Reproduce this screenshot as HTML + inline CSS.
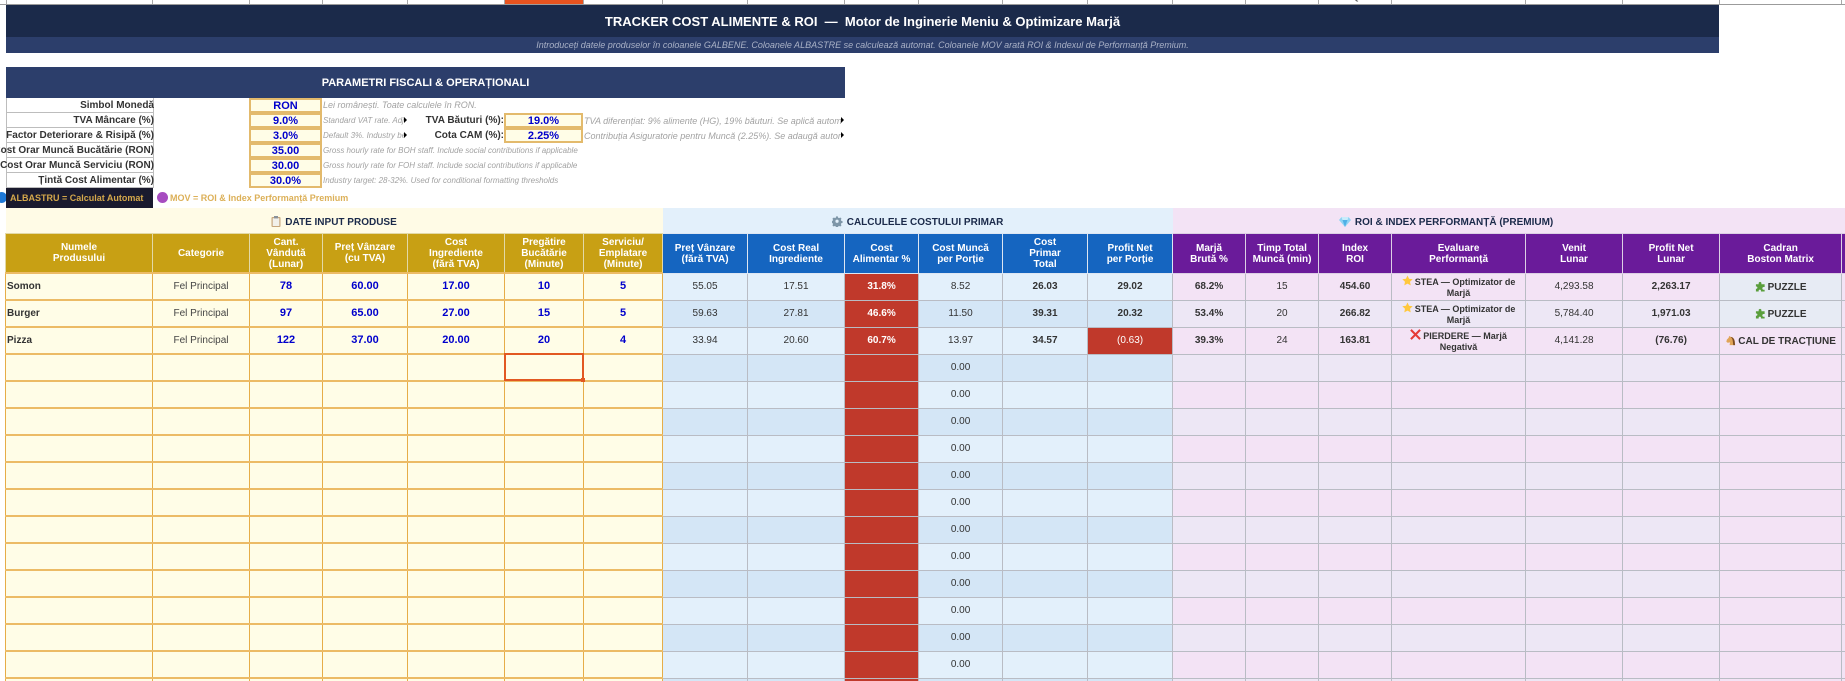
<!DOCTYPE html>
<html lang="ro">
<head>
<meta charset="utf-8">
<title>Tracker Cost Alimente &amp; ROI</title>
<style>
html,body{margin:0;padding:0;background:#fff;width:1845px;height:681px;overflow:hidden}
body{font-family:"Liberation Sans",sans-serif}
#w{position:absolute;left:0;top:0;width:1845px;height:681px;overflow:hidden;background:#fff}
.a{position:absolute;white-space:pre;overflow:hidden}
.top{left:0;top:0;width:1845px;height:4px;border-bottom:1px solid #9b9b9b;background:#fff}
.tl{position:absolute;top:0;width:1px;height:4px;background:#a8a8a8}
.title{left:6px;top:5px;width:1713px;height:32px;background:#1b2a4a;color:#fff;font:bold 13px/34px "Liberation Sans",sans-serif;text-align:center}
.sub{left:6px;top:37px;width:1713px;height:16px;background:#2c3e6b;color:#a9b1c6;font:italic 9px/16px "Liberation Sans",sans-serif;text-align:center}
.phead{left:6px;top:67px;width:839px;height:31px;background:#2c3e6b;color:#fff;font:bold 11px/33px "Liberation Sans",sans-serif;text-align:center}
.lab{left:6px;width:146px;height:14px;border:1px solid #bdbdbd;border-top:0;overflow:visible;background:#fff}
.lab span{position:absolute;right:-1px;top:1px;white-space:pre;font:bold 10px/14px "Liberation Sans",sans-serif;color:#333}
.val{width:69px;height:11px;border:2px solid #e3ba6c;background:#fffde7;color:#0000cc;font:bold 11px/13px "Liberation Sans",sans-serif;text-align:center}
.lab2{width:130px;text-align:right;font:bold 10px/15px "Liberation Sans",sans-serif;color:#333;height:16px}
.note{color:#a2a2a2;font:italic 8px/15px "Liberation Sans",sans-serif;height:15px}
.note2{color:#a2a2a2;font:italic 9px/15px "Liberation Sans",sans-serif;height:15px}
.tri{position:absolute;width:0;height:0;border-left:3px solid #000;border-top:3px solid transparent;border-bottom:3px solid transparent}
.leg{left:6px;top:188px;width:147px;height:20px;background:#1a1a2e;color:#d4a84b;font:bold 9px/20px "Liberation Sans",sans-serif;text-indent:4px}
.leg2{left:170px;top:188px;height:20px;color:#dcb058;font:bold 9px/20px "Liberation Sans",sans-serif}
.dot{position:absolute;border-radius:50%}
table{position:absolute;left:5px;top:208px;border-collapse:collapse;table-layout:fixed;width:1856px}
td{padding:0;overflow:hidden;text-align:center;vertical-align:middle;font:10px/11px "Liberation Sans",sans-serif;color:#333;white-space:nowrap}
tr.s{height:25px}
tr.h{height:40px}
tr.r{height:27px}
tr.s td{padding-top:3px}
tr.h td{padding-top:1px}
.sec{font-weight:bold;color:#1b2a4a;border:0}
.sy{background:#fffbe6}.sb{background:#e3f0fb}.sp{background:#f3e3f5}
.sec svg{vertical-align:-2px;margin-right:4px}
.hy,.hb,.hp{color:#fff;font-weight:bold;border:1px solid #e6e3dc;white-space:normal}
.hy{background:#c8a014;border-color:#e3d9a6}
.hb{background:#1565c0;border-color:#dde6f2}
.hp{background:#6a1b9a;border-color:#dccfe4}
.y{background:#fffde7;border-style:solid;border-width:2px 1px;border-color:#ecbb66 #e6ad48}
.b,.p,.q,.red,.c{border:1px solid #b9bcc4}
.b{background:#e3f0fb}
tr.alt .b{background:#d4e6f6}
.p{background:#f3e3f5}
tr.alt .p{background:#ede7f5}
.q{background:#f3e3f5}
.c{background:#e7ebf4}
.red{background:#c0392b;color:#fff}
.n{color:#0000cc;font-weight:bold;font-size:11px}
.l{text-align:left;font-weight:bold;padding-left:1px}
.g{color:#444}
.v{font-weight:bold}
.e{font-weight:bold;font-size:9px;white-space:normal}
.e svg{vertical-align:-1px;margin-right:2px}
.cd{font-weight:bold}
.cd svg{vertical-align:-2px;margin-right:2px}
.sel{left:504px;top:353px;width:76px;height:24px;border:2px solid #e25822;overflow:visible}
.sel i{position:absolute;right:-3px;bottom:-3px;width:4px;height:4px;background:#e25822}
</style>
</head>
<body>
<div id="w">

<div class="a top">
<div class="tl" style="left:6px"></div><div class="tl" style="left:152px"></div><div class="tl" style="left:249px"></div><div class="tl" style="left:322px"></div><div class="tl" style="left:407px"></div><div class="tl" style="left:504px"></div><div class="tl" style="left:583px"></div><div class="tl" style="left:662px"></div><div class="tl" style="left:747px"></div><div class="tl" style="left:844px"></div><div class="tl" style="left:918px"></div><div class="tl" style="left:1002px"></div><div class="tl" style="left:1087px"></div><div class="tl" style="left:1172px"></div><div class="tl" style="left:1245px"></div><div class="tl" style="left:1318px"></div><div class="tl" style="left:1391px"></div><div class="tl" style="left:1525px"></div><div class="tl" style="left:1622px"></div><div class="tl" style="left:1719px"></div><div class="tl" style="left:1841px"></div>
<div style="position:absolute;left:505px;top:0;width:78px;height:4px;background:#e8531f"></div>
<div style="position:absolute;left:1351px;top:-9px;font:11px/11px 'Liberation Sans',sans-serif;color:#444">Q</div>
</div>

<div class="a title">TRACKER COST ALIMENTE &amp; ROI  —  Motor de Inginerie Meniu &amp; Optimizare Marjă</div>
<div class="a sub">Introduceți datele produselor în coloanele GALBENE. Coloanele ALBASTRE se calculează automat. Coloanele MOV arată ROI &amp; Indexul de Performanță Premium.</div>
<div class="a phead">PARAMETRI FISCALI &amp; OPERAȚIONALI</div>

<div class="a lab" style="top:98px"><span>Simbol Monedă</span></div>
<div class="a lab" style="top:113px"><span>TVA Mâncare (%)</span></div>
<div class="a lab" style="top:128px"><span>Factor Deteriorare &amp; Risipă (%)</span></div>
<div class="a lab" style="top:143px"><span>Cost Orar Muncă Bucătărie (RON)</span></div>
<div class="a lab" style="top:158px"><span>Cost Orar Muncă Serviciu (RON)</span></div>
<div class="a lab" style="top:173px"><span>Țintă Cost Alimentar (%)</span></div>

<div class="a val" style="left:249px;top:98px">RON</div>
<div class="a val" style="left:249px;top:113px">9.0%</div>
<div class="a val" style="left:249px;top:128px">3.0%</div>
<div class="a val" style="left:249px;top:143px">35.00</div>
<div class="a val" style="left:249px;top:158px">30.00</div>
<div class="a val" style="left:249px;top:173px">30.0%</div>

<div class="a note2" style="left:323px;top:98px;width:180px">Lei românești. Toate calculele în RON.</div>
<div class="a note" style="left:323px;top:113px;width:81px">Standard VAT rate. Adjust if applicable</div>
<div class="a note" style="left:323px;top:128px;width:81px">Default 3%. Industry benchmark</div>
<div class="a note" style="left:323px;top:143px;width:262px">Gross hourly rate for BOH staff. Include social contributions if applicable</div>
<div class="a note" style="left:323px;top:158px;width:262px">Gross hourly rate for FOH staff. Include social contributions if applicable</div>
<div class="a note" style="left:323px;top:173px;width:262px">Industry target: 28-32%. Used for conditional formatting thresholds</div>
<div class="tri" style="left:404px;top:117px"></div>
<div class="tri" style="left:404px;top:132px"></div>

<div class="a lab2" style="left:374px;top:113px">TVA Băuturi (%):</div>
<div class="a lab2" style="left:374px;top:128px">Cota CAM (%):</div>
<div class="a val" style="left:504px;top:113px;width:75px">19.0%</div>
<div class="a val" style="left:504px;top:128px;width:75px">2.25%</div>
<div class="a note2" style="left:584px;top:114px;width:257px">TVA diferențiat: 9% alimente (HG), 19% băuturi. Se aplică automat la calcule</div>
<div class="a note2" style="left:584px;top:129px;width:257px">Contribuția Asiguratorie pentru Muncă (2.25%). Se adaugă automat la calcule</div>
<div class="tri" style="left:841px;top:117px"></div>
<div class="tri" style="left:841px;top:132px"></div>

<div class="dot" style="left:-4px;top:192px;width:11px;height:11px;background:#1e78d6"></div>
<div class="a leg">ALBASTRU = Calculat Automat</div>
<div class="dot" style="left:157px;top:192px;width:11px;height:11px;background:#a64cc0"></div>
<div class="a leg2">MOV = ROI &amp; Index Performanță Premium</div>

<table>
<colgroup>
<col style="width:147px"><col style="width:97px"><col style="width:73px"><col style="width:85px"><col style="width:97px"><col style="width:79px"><col style="width:79px">
<col style="width:85px"><col style="width:97px"><col style="width:74px"><col style="width:84px"><col style="width:85px"><col style="width:85px">
<col style="width:73px"><col style="width:73px"><col style="width:73px"><col style="width:134px"><col style="width:97px"><col style="width:97px"><col style="width:122px"><col style="width:20px">
</colgroup>
<tr class="s">
<td class="sec sy" colspan="7"><svg width="10" height="11" viewBox="0 0 10 11"><rect x="0.5" y="1" width="9" height="10" rx="1" fill="#c7a67c"/><rect x="1.7" y="2.2" width="6.6" height="7.8" fill="#f2f0ea"/><rect x="3" y="0" width="4" height="2.4" fill="#8a9199"/></svg>DATE INPUT PRODUSE</td>
<td class="sec sb" colspan="6"><svg width="11" height="11" viewBox="0 0 24 24"><path fill="#7e96a8" d="M10 1h4l1 3.200 2.200.9 3-1.500 2.800 2.800-1.500 3 .9 2.200 3.200 1v4l-3.200 1-.9 2.200 1.500 3-2.800 2.800-3-1.500-2.200.9-1 3.200h-4l-1-3.200-2.200-.9-3 1.500-2.800-2.800 1.500-3-.9-2.200-3.200-1v-4l3.200-1 .9-2.200-1.500-3L4.600 3.600l3 1.500 1.400-.9z" transform="scale(.9)"/><circle cx="11" cy="11.500" r="3.500" fill="#e3f0fb"/></svg>CALCULELE COSTULUI PRIMAR</td>
<td class="sec sp" colspan="6"><svg width="12" height="11" viewBox="0 0 12 11"><path d="M2.500 1h7L12 4l-6 7-6-7z" fill="#8fd3f4"/><path d="M3.500 4h5L6 11z" fill="#4fb0e6"/><path d="M2.500 1h7L8.500 4h-5z" fill="#c9ecfb"/></svg>ROI &amp; INDEX PERFORMANȚĂ (PREMIUM)</td>
<td class="sp" style="border:0"></td><td class="sp" style="border:0"></td>
</tr>
<tr class="h">
<td class="hy">Numele<br>Produsului</td><td class="hy">Categorie</td><td class="hy">Cant.<br>Vândută<br>(Lunar)</td><td class="hy">Preț Vânzare<br>(cu TVA)</td><td class="hy">Cost<br>Ingrediente<br>(fără TVA)</td><td class="hy">Pregătire<br>Bucătărie<br>(Minute)</td><td class="hy">Serviciu/<br>Emplatare<br>(Minute)</td>
<td class="hb">Preț Vânzare<br>(fără TVA)</td><td class="hb">Cost Real<br>Ingrediente</td><td class="hb">Cost<br>Alimentar %</td><td class="hb">Cost Muncă<br>per Porție</td><td class="hb">Cost<br>Primar<br>Total</td><td class="hb">Profit Net<br>per Porție</td>
<td class="hp">Marjă<br>Brută %</td><td class="hp">Timp Total<br>Muncă (min)</td><td class="hp">Index<br>ROI</td><td class="hp">Evaluare<br>Performanță</td><td class="hp">Venit<br>Lunar</td><td class="hp">Profit Net<br>Lunar</td><td class="hp">Cadran<br>Boston Matrix</td><td class="hp"></td>
</tr>
<tr class="r">
<td class="y l">Somon</td><td class="y g">Fel Principal</td><td class="y n">78</td><td class="y n">60.00</td><td class="y n">17.00</td><td class="y n">10</td><td class="y n">5</td>
<td class="b">55.05</td><td class="b">17.51</td><td class="red v">31.8%</td><td class="b">8.52</td><td class="b v">26.03</td><td class="b v">29.02</td>
<td class="p v">68.2%</td><td class="p">15</td><td class="p v">454.60</td><td class="p e"><svg width="11" height="11" viewBox="0 0 24 24"><path fill="#ffc83d" d="M12 1l3.400 7.300 7.900 1-5.800 5.400 1.500 7.900L12 18.700l-7 3.900 1.500-7.900L.7 9.300l7.900-1z"/></svg>STEA — Optimizator de Marjă</td><td class="p">4,293.58</td><td class="p v">2,263.17</td><td class="c cd"><svg width="11" height="11" viewBox="0 0 24 24"><path fill="#5a9e3c" d="M2 7h6V5c0-4 6-4 6 0v2h7v6h-2c-4 0-4 6 0 6h2v4h-8v-2c0-3-5-3-5 0v2H2v-6h1c3 0 3-5 0-5H2z"/></svg>PUZZLE</td><td class="q"></td>
</tr>
<tr class="r alt">
<td class="y l">Burger</td><td class="y g">Fel Principal</td><td class="y n">97</td><td class="y n">65.00</td><td class="y n">27.00</td><td class="y n">15</td><td class="y n">5</td>
<td class="b">59.63</td><td class="b">27.81</td><td class="red v">46.6%</td><td class="b">11.50</td><td class="b v">39.31</td><td class="b v">20.32</td>
<td class="p v">53.4%</td><td class="p">20</td><td class="p v">266.82</td><td class="p e"><svg width="11" height="11" viewBox="0 0 24 24"><path fill="#ffc83d" d="M12 1l3.400 7.300 7.900 1-5.800 5.400 1.500 7.900L12 18.700l-7 3.900 1.500-7.900L.7 9.300l7.900-1z"/></svg>STEA — Optimizator de Marjă</td><td class="p">5,784.40</td><td class="p v">1,971.03</td><td class="c cd"><svg width="11" height="11" viewBox="0 0 24 24"><path fill="#5a9e3c" d="M2 7h6V5c0-4 6-4 6 0v2h7v6h-2c-4 0-4 6 0 6h2v4h-8v-2c0-3-5-3-5 0v2H2v-6h1c3 0 3-5 0-5H2z"/></svg>PUZZLE</td><td class="q"></td>
</tr>
<tr class="r">
<td class="y l">Pizza</td><td class="y g">Fel Principal</td><td class="y n">122</td><td class="y n">37.00</td><td class="y n">20.00</td><td class="y n">20</td><td class="y n">4</td>
<td class="b">33.94</td><td class="b">20.60</td><td class="red v">60.7%</td><td class="b">13.97</td><td class="b v">34.57</td><td class="red">(0.63)</td>
<td class="p v">39.3%</td><td class="p">24</td><td class="p v">163.81</td><td class="p e"><svg width="11" height="11" viewBox="0 0 24 24"><path fill="none" stroke="#e53935" stroke-width="4.500" d="M2 2l20 20M22 2L2 22"/></svg>PIERDERE — Marjă Negativă</td><td class="p">4,141.28</td><td class="p v">(76.76)</td><td class="q cd"><svg width="11" height="11" viewBox="0 0 24 24"><path fill="#e0a458" d="M9 2l3 2c5 0 8 4 9 9l1 9H10l1-6-5 1-3-2 1-5 4-4z"/><path fill="#7c4a21" d="M12 4c5 0 8 4 9 9l1 9h-4l-1-9c-.5-4-2-7-5-9z"/></svg>CAL DE TRACȚIUNE</td><td class="q"></td>
</tr>
<tr class="r alt"><td class="y"></td><td class="y"></td><td class="y"></td><td class="y"></td><td class="y"></td><td class="y"></td><td class="y"></td><td class="b"></td><td class="b"></td><td class="red"></td><td class="b">0.00</td><td class="b"></td><td class="b"></td><td class="p"></td><td class="p"></td><td class="p"></td><td class="p"></td><td class="p"></td><td class="p"></td><td class="q"></td><td class="q"></td></tr>
<tr class="r"><td class="y"></td><td class="y"></td><td class="y"></td><td class="y"></td><td class="y"></td><td class="y"></td><td class="y"></td><td class="b"></td><td class="b"></td><td class="red"></td><td class="b">0.00</td><td class="b"></td><td class="b"></td><td class="p"></td><td class="p"></td><td class="p"></td><td class="p"></td><td class="p"></td><td class="p"></td><td class="q"></td><td class="q"></td></tr>
<tr class="r alt"><td class="y"></td><td class="y"></td><td class="y"></td><td class="y"></td><td class="y"></td><td class="y"></td><td class="y"></td><td class="b"></td><td class="b"></td><td class="red"></td><td class="b">0.00</td><td class="b"></td><td class="b"></td><td class="p"></td><td class="p"></td><td class="p"></td><td class="p"></td><td class="p"></td><td class="p"></td><td class="q"></td><td class="q"></td></tr>
<tr class="r"><td class="y"></td><td class="y"></td><td class="y"></td><td class="y"></td><td class="y"></td><td class="y"></td><td class="y"></td><td class="b"></td><td class="b"></td><td class="red"></td><td class="b">0.00</td><td class="b"></td><td class="b"></td><td class="p"></td><td class="p"></td><td class="p"></td><td class="p"></td><td class="p"></td><td class="p"></td><td class="q"></td><td class="q"></td></tr>
<tr class="r alt"><td class="y"></td><td class="y"></td><td class="y"></td><td class="y"></td><td class="y"></td><td class="y"></td><td class="y"></td><td class="b"></td><td class="b"></td><td class="red"></td><td class="b">0.00</td><td class="b"></td><td class="b"></td><td class="p"></td><td class="p"></td><td class="p"></td><td class="p"></td><td class="p"></td><td class="p"></td><td class="q"></td><td class="q"></td></tr>
<tr class="r"><td class="y"></td><td class="y"></td><td class="y"></td><td class="y"></td><td class="y"></td><td class="y"></td><td class="y"></td><td class="b"></td><td class="b"></td><td class="red"></td><td class="b">0.00</td><td class="b"></td><td class="b"></td><td class="p"></td><td class="p"></td><td class="p"></td><td class="p"></td><td class="p"></td><td class="p"></td><td class="q"></td><td class="q"></td></tr>
<tr class="r alt"><td class="y"></td><td class="y"></td><td class="y"></td><td class="y"></td><td class="y"></td><td class="y"></td><td class="y"></td><td class="b"></td><td class="b"></td><td class="red"></td><td class="b">0.00</td><td class="b"></td><td class="b"></td><td class="p"></td><td class="p"></td><td class="p"></td><td class="p"></td><td class="p"></td><td class="p"></td><td class="q"></td><td class="q"></td></tr>
<tr class="r"><td class="y"></td><td class="y"></td><td class="y"></td><td class="y"></td><td class="y"></td><td class="y"></td><td class="y"></td><td class="b"></td><td class="b"></td><td class="red"></td><td class="b">0.00</td><td class="b"></td><td class="b"></td><td class="p"></td><td class="p"></td><td class="p"></td><td class="p"></td><td class="p"></td><td class="p"></td><td class="q"></td><td class="q"></td></tr>
<tr class="r alt"><td class="y"></td><td class="y"></td><td class="y"></td><td class="y"></td><td class="y"></td><td class="y"></td><td class="y"></td><td class="b"></td><td class="b"></td><td class="red"></td><td class="b">0.00</td><td class="b"></td><td class="b"></td><td class="p"></td><td class="p"></td><td class="p"></td><td class="p"></td><td class="p"></td><td class="p"></td><td class="q"></td><td class="q"></td></tr>
<tr class="r"><td class="y"></td><td class="y"></td><td class="y"></td><td class="y"></td><td class="y"></td><td class="y"></td><td class="y"></td><td class="b"></td><td class="b"></td><td class="red"></td><td class="b">0.00</td><td class="b"></td><td class="b"></td><td class="p"></td><td class="p"></td><td class="p"></td><td class="p"></td><td class="p"></td><td class="p"></td><td class="q"></td><td class="q"></td></tr>
<tr class="r alt"><td class="y"></td><td class="y"></td><td class="y"></td><td class="y"></td><td class="y"></td><td class="y"></td><td class="y"></td><td class="b"></td><td class="b"></td><td class="red"></td><td class="b">0.00</td><td class="b"></td><td class="b"></td><td class="p"></td><td class="p"></td><td class="p"></td><td class="p"></td><td class="p"></td><td class="p"></td><td class="q"></td><td class="q"></td></tr>
<tr class="r"><td class="y"></td><td class="y"></td><td class="y"></td><td class="y"></td><td class="y"></td><td class="y"></td><td class="y"></td><td class="b"></td><td class="b"></td><td class="red"></td><td class="b">0.00</td><td class="b"></td><td class="b"></td><td class="p"></td><td class="p"></td><td class="p"></td><td class="p"></td><td class="p"></td><td class="p"></td><td class="q"></td><td class="q"></td></tr>
<tr class="r alt"><td class="y"></td><td class="y"></td><td class="y"></td><td class="y"></td><td class="y"></td><td class="y"></td><td class="y"></td><td class="b"></td><td class="b"></td><td class="red"></td><td class="b">0.00</td><td class="b"></td><td class="b"></td><td class="p"></td><td class="p"></td><td class="p"></td><td class="p"></td><td class="p"></td><td class="p"></td><td class="q"></td><td class="q"></td></tr>
</table>

<div class="a sel"><i></i></div>

</div>
</body>
</html>
